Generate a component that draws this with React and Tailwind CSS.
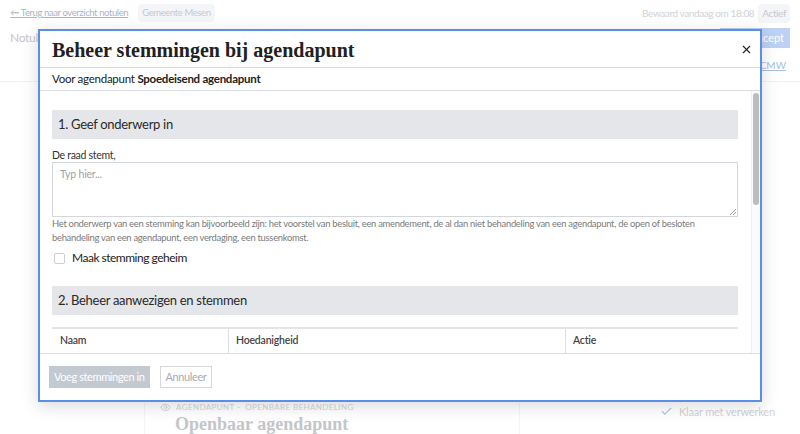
import { X, Eye, Check } from 'lucide-react';

const sans = { fontFamily: 'Lato, "Liberation Sans", sans-serif' };
const serif = { fontFamily: '"Liberation Serif", serif' };

function Background() {
  return (
    <div className="h-[434px] w-[800px] overflow-hidden bg-white text-[#c4c8cf]" style={sans}>
      <div className="flex h-[26px] items-center justify-between px-[10px]">
        <div className="flex items-center gap-[10px]">
          <span className="text-[9.5px] tracking-[-0.4px] text-[#aab5c8] underline">← Terug naar overzicht notulen</span>
          <span className="rounded-sm bg-[#f4f5f7] px-[4px] py-[2px] text-[9.5px] tracking-[-0.4px] text-[#c6c9cf]">Gemeente Mesen</span>
        </div>
        <div className="flex items-center gap-[4px] text-[10px] tracking-[-0.4px]">
          <span className="text-[#cfd2d6]">Bewaard vandaag om 18:08</span>
          <span className="rounded-sm bg-[#f4f5f7] px-[4px] py-[2px] text-[10px] text-[#c6c9cf]">Actief</span>
        </div>
      </div>
      <div className="flex h-[24px] items-center justify-between px-[10px]">
        <span className="text-[12px] tracking-[-0.3px] text-[#c4c6ca]">Notulen</span>
        <span className="flex h-[20px] w-[70px] items-center justify-end bg-[#bcd1f3] pr-[6px] text-[11px] text-white">Concept</span>
      </div>
      <div className="flex h-[32px] items-center justify-end border-b border-[#f2f3f5] pr-[14px]">
        <span className="text-[10px] text-[#a9c0e6] underline">OCMW</span>
      </div>
      <div className="flex h-[352px]">
        <div className="w-[145px] border-r border-[#f3f4f6]" />
        <div className="flex flex-1 flex-col border-r border-[#f3f4f6] pl-[15px] pt-[319px]">
          <div className="flex h-[12px] items-center gap-[5px] text-[8px] tracking-wider text-[#d3d5d9]">
            <Eye size={11} strokeWidth={2} className="text-[#d0d2d6]" />
            <span>AGENDAPUNT - &nbsp;OPENBARE BEHANDELING</span>
          </div>
          <div className="pl-[15px] text-[18px] font-bold leading-[22px] text-[#c3c5c9]" style={serif}>
            Openbaar agendapunt
          </div>
        </div>
        <div className="flex w-[280px] flex-col items-start justify-end pb-[14px] pl-[140px]">
          <div className="flex items-center gap-[6px] text-[11px] tracking-[-0.2px] text-[#d0d2d6]">
            <Check size={13} strokeWidth={2} className="text-[#a9c4ee]" />
            <span>Klaar met verwerken</span>
          </div>
        </div>
      </div>
    </div>
  );
}

function SectionHeader({ children }) {
  return (
    <div className="flex h-[29px] items-center bg-[#e5e6e9] pl-[6px] text-[13px] tracking-[-0.3px] text-[#2a2a2a]">
      {children}
    </div>
  );
}

function Modal() {
  return (
    <div className="flex h-[373px] w-[724px] flex-col border-2 border-[#5b8ee9] bg-white shadow-[0_4px_16px_rgba(0,0,0,0.15)]" style={sans}>
      <div className="flex h-[37px] shrink-0 items-center justify-between border-b border-[#d9dce2] pl-[12px] pr-[7px]">
        <h1 className="pt-[2px] text-[20px] font-bold text-[#212121]" style={serif}>
          Beheer stemmingen bij agendapunt
        </h1>
        <X size={13} strokeWidth={2} className="text-[#222]" />
      </div>
      <div className="flex h-[23px] shrink-0 items-center border-b border-[#d9dce2] pl-[12px] text-[11.5px] tracking-[-0.25px] text-[#222]">
        Voor agendapunt&nbsp;<span className="font-bold">Spoedeisend agendapunt</span>
      </div>
      <div className="flex h-[263px] shrink-0 border-b border-[#d9dce2]">
        <div className="min-w-0 flex-1 overflow-hidden pl-[12px] pr-[13px] pt-[19px]">
          <SectionHeader>1. Geef onderwerp in</SectionHeader>
          <div className="pt-[9px] text-[10.5px] leading-[14px] tracking-[-0.3px] text-[#333]">De raad stemt,</div>
          <div className="relative h-[55px] border border-[#d3d6dc] px-[7px] pt-[4px] text-[10.5px] tracking-[-0.2px] text-[#a0a0a0]">
            Typ hier...
            <svg className="absolute bottom-[1px] right-[1px]" width="6" height="6" viewBox="0 0 6 6">
              <path d="M6 0 L0 6 M6 3 L3 6" stroke="#888" strokeWidth="0.8" />
            </svg>
          </div>
          <p className="max-w-[668px] text-[9.4px] leading-[14px] tracking-[-0.27px] text-[#7a7a7a]">
            Het onderwerp van een stemming kan bijvoorbeeld zijn: het voorstel van besluit, een amendement, de al dan niet behandeling van een agendapunt, de open of besloten behandeling van een agendapunt, een verdaging, een tussenkomst.
          </p>
          <label className="mt-[5px] flex h-[16px] items-center gap-[7px] pl-[2px] text-[12px] tracking-[-0.5px] text-[#222]">
            <span className="h-[11px] w-[11px] rounded-[2px] border border-[#ccd0d6] bg-white" />
            Maak stemming geheim
          </label>
          <div className="pt-[20px]">
            <SectionHeader>2. Beheer aanwezigen en stemmen</SectionHeader>
          </div>
          <div className="mt-[12px] grid grid-cols-[177px_337px_1fr] border-t-2 border-[#e3e5e8] text-[10.5px] font-semibold tracking-[-0.2px] text-[#444]">
            <div className="flex h-[24px] items-center border-r border-[#dcdfe3] pl-[8px]">Naam</div>
            <div className="flex h-[24px] items-center border-r border-[#dcdfe3] pl-[7px]">Hoedanigheid</div>
            <div className="flex h-[24px] items-center pl-[7px]">Actie</div>
          </div>
        </div>
        <div className="w-[9px] shrink-0 border-l border-[#eeeff1] bg-[#fbfbfb] pl-[1px] pt-[2px]">
          <div className="h-[112px] w-[6px] rounded-full bg-[#bdbdbd]" />
        </div>
      </div>
      <div className="flex h-[46px] shrink-0 items-center gap-[10px] pl-[9px] text-[11px] tracking-[-0.4px]">
        <span className="flex h-[22px] items-center bg-[#c3c9d1] px-[5px] text-white">Voeg stemmingen in</span>
        <span className="flex h-[22px] items-center border border-[#d6d8dc] px-[5px] text-[#a9abaf]">Annuleer</span>
      </div>
    </div>
  );
}

export default function App() {
  return (
    <div className="relative h-[434px] w-[800px] overflow-hidden">
      <Background />
      <div className="absolute inset-0 flex justify-center pt-[29px]">
        <Modal />
      </div>
    </div>
  );
}
